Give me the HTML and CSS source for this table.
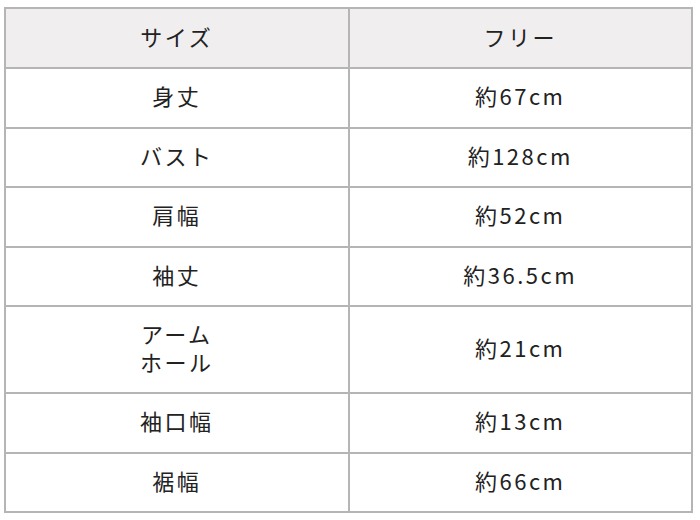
FILE: index.html
```html
<!DOCTYPE html>
<html lang="ja">
<head>
<meta charset="utf-8">
<link rel="stylesheet" href="styles.css">
</head>
<body>
<table class="size-table">
  <tr class="head"><td>サイズ</td><td>フリー</td></tr>
  <tr><td>身丈</td><td>約67cm</td></tr>
  <tr><td>バスト</td><td>約128cm</td></tr>
  <tr><td>肩幅</td><td>約52cm</td></tr>
  <tr><td>袖丈</td><td>約36.5cm</td></tr>
  <tr class="tall"><td>アーム<br>ホール</td><td>約21cm</td></tr>
  <tr><td>袖口幅</td><td>約13cm</td></tr>
  <tr><td>裾幅</td><td>約66cm</td></tr>
</table>
</body>
</html>
```
FILE: styles.css
```css
html, body {
  margin: 0;
  padding: 0;
  background: #ffffff;
}
body {
  padding: 7px 0 0 4px;
  font-family: "Noto Sans CJK JP", "Noto Sans", sans-serif;
  color: #222222;
}
.size-table {
  border-collapse: collapse;
  width: 689px;
  table-layout: fixed;
}
.size-table td {
  border: 2px solid #b5b5b5;
  text-align: center;
  vertical-align: middle;
  font-size: 22px;
  letter-spacing: 2.5px;
  line-height: 30px;
  height: 52.5px;
  padding: 0 0 5px 0;
  width: 50%;
  font-weight: 400;
}
.size-table tr.head td {
  background: #f0eeee;
  height: 53px;
}
.size-table tr.tall td {
  height: 80px;
  line-height: 28px;
}
```
